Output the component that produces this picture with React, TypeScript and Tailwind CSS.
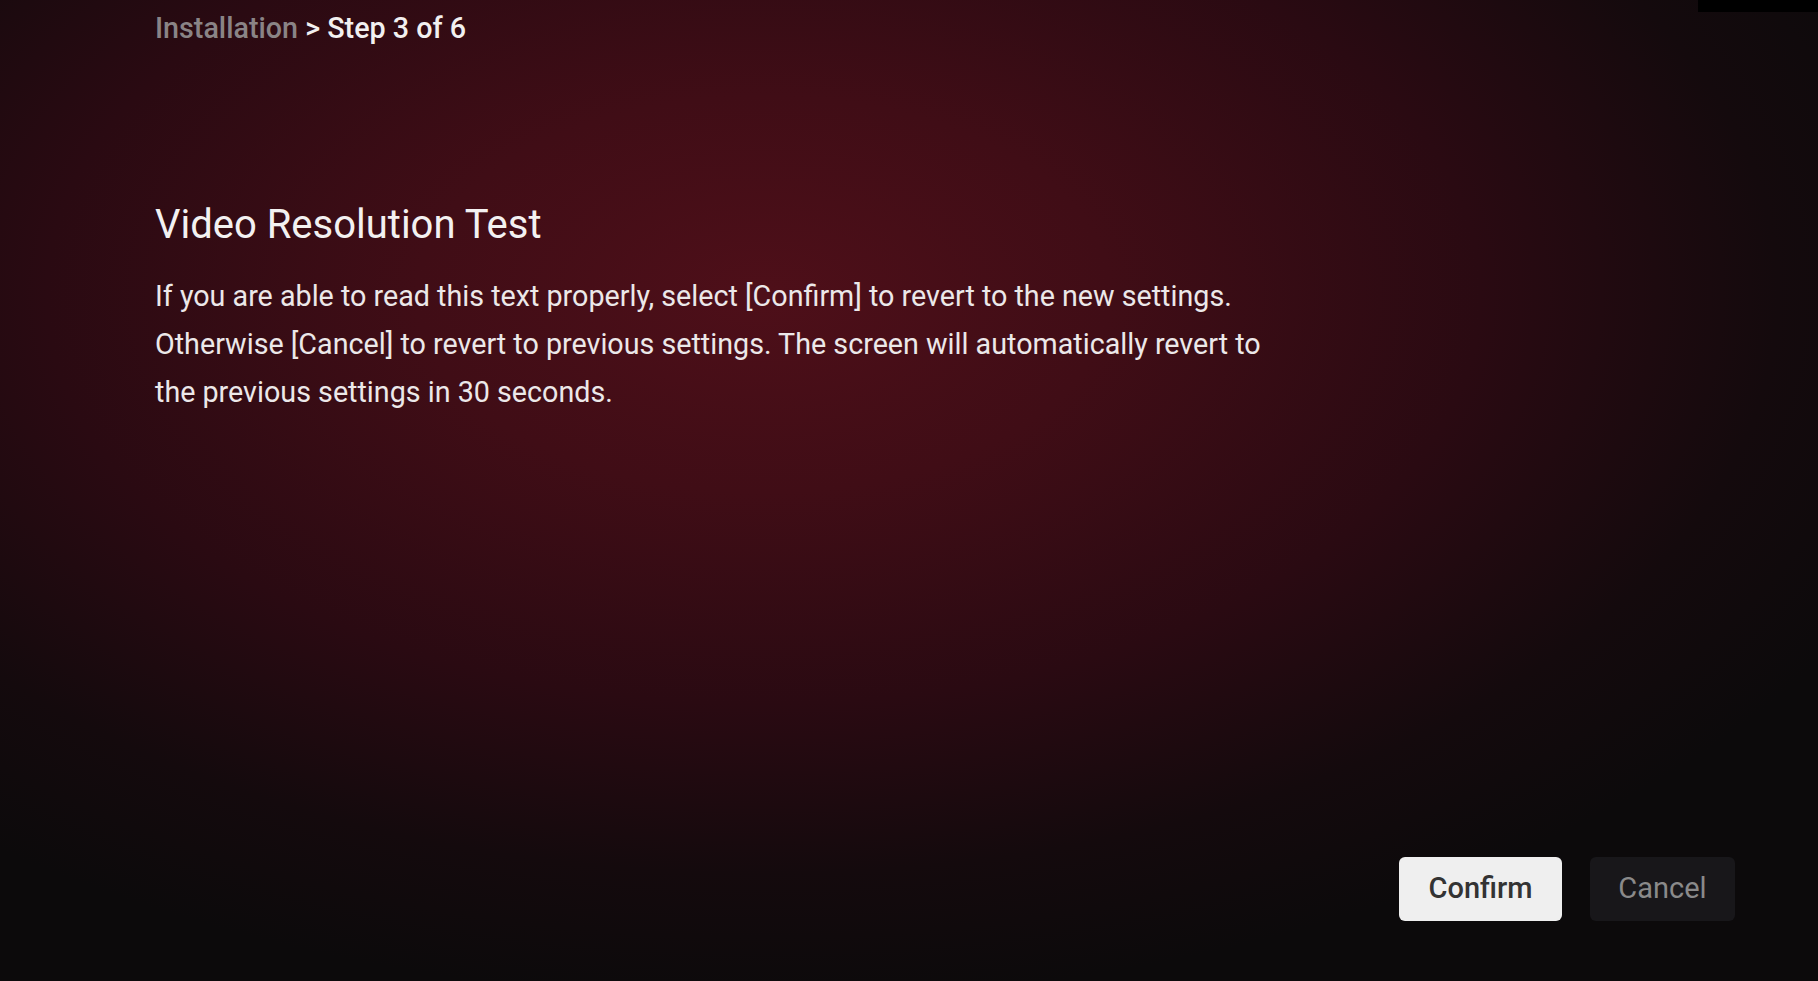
export default function App() {
  return (
    <div
      className="relative flex h-[981px] w-[1818px] flex-col overflow-hidden bg-[#0c0a0b] bg-[radial-gradient(ellipse_68%_72%_at_42%_30%,#4e0f19_0%,#400d16_28%,#2a0a12_58%,#140a0d_82%,#0c0a0b_100%)] font-['Roboto',sans-serif] text-white"
    >
      {/* black strip in the top right corner */}
      <div className="absolute right-0 top-0 h-[12px] w-[120px] bg-black" />

      {/* breadcrumb */}
      <div className="pl-[155px] pt-[10px] text-[28.7px] leading-[36px] font-medium">
        <span className="text-[#8a8486]">Installation</span>
        <span className="text-[#f2f0f0]"> &gt; Step 3 of 6</span>
      </div>

      {/* content */}
      <div className="pl-[155px] pt-[156px]">
        <h1 className="text-[40px] leading-[46px] font-normal text-[#f3f1f1]">Video Resolution Test</h1>
        <p className="mt-[24px] w-[1300px] text-[28.7px] leading-[48px] text-[#ece8e9]">
          If you are able to read this text properly, select [Confirm] to revert to the new settings.
          <br />
          Otherwise [Cancel] to revert to previous settings. The screen will automatically revert to
          <br />
          the previous settings in 30 seconds.
        </p>
      </div>

      {/* buttons */}
      <div className="mt-auto flex justify-end gap-[28px] pb-[60px] pr-[83px]">
        <button className="h-[64px] w-[163px] rounded-[6px] bg-[#efefef] text-[29px] font-medium text-[#333333]">
          Confirm
        </button>
        <button className="h-[64px] w-[145px] rounded-[6px] bg-[#18171a] text-[29px] font-normal text-[#8a8a8a]">
          Cancel
        </button>
      </div>
    </div>
  );
}
